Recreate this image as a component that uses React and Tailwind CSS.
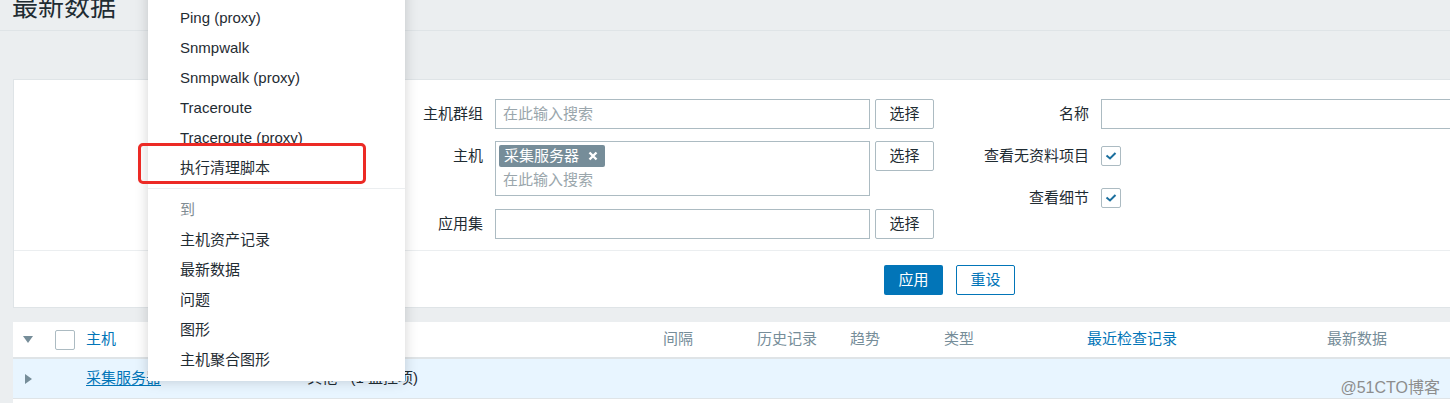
import React from 'react';

const menuTop = ['Ping', 'Ping (proxy)', 'Snmpwalk', 'Snmpwalk (proxy)', 'Traceroute', 'Traceroute (proxy)', '执行清理脚本'];
const menuGoto = ['主机资产记录', '最新数据', '问题', '图形', '主机聚合图形'];

function Checkbox({ checked }) {
  return (
    <span className="w-[20px] h-[20px] border border-[#acbbc2] rounded-[2px] bg-white flex items-center justify-center">
      {checked && (
        <svg width="12" height="10" viewBox="0 0 12 10">
          <polyline points="1.5,4.5 5,7.5 10.5,2" fill="none" stroke="#1b6f9e" strokeWidth="2" />
        </svg>
      )}
    </span>
  );
}

function SelectButton() {
  return (
    <button className="w-[59px] h-[30px] border border-[#acbbc2] rounded-[2px] bg-white text-[#1f2c33] shrink-0">
      选择
    </button>
  );
}

export default function App() {
  return (
    <div className="relative w-[1450px] h-[403px] overflow-hidden bg-[#ebeef0] text-[15px] text-[#1f2c33] font-['Liberation_Sans','Noto_Sans_CJK_SC',sans-serif]">
      {/* Header */}
      <div className="flex items-start h-[31px] border-b border-[#dfe4e7] pl-[12px]">
        <h1 className="text-[26px] leading-[26px] -mt-[6px]">最新数据</h1>
      </div>

      {/* Filter */}
      <div className="mt-[48px] ml-[13px] bg-white border border-r-0 border-[#dfe4e7]">
        <div className="flex pt-[19px] pb-[11px]">
          <div className="w-[920px] flex flex-col">
            <div className="flex items-start">
              <label className="w-[481px] pr-[12px] text-right leading-[30px]">主机群组</label>
              <div className="w-[375px] h-[30px] border border-[#acbbc2] px-[7px] leading-[28px] text-[#9aa6ac]">在此输入搜索</div>
              <div className="ml-[5px]"><SelectButton /></div>
            </div>
            <div className="flex items-start mt-[12px]">
              <label className="w-[481px] pr-[12px] text-right leading-[30px]">主机</label>
              <div className="w-[375px] h-[55px] border border-[#acbbc2] px-[3px] pt-[3px]">
                <span className="inline-flex items-center h-[22px] bg-[#768d99] text-white rounded-[2px] pl-[5px] pr-[7px]">
                  采集服务器
                  <svg className="ml-[9px]" width="10" height="10" viewBox="0 0 10 10">
                    <path d="M1.5 1.5 L8.5 8.5 M8.5 1.5 L1.5 8.5" stroke="#fff" strokeWidth="2.4" />
                  </svg>
                </span>
                <div className="pl-[4px] leading-[24px] text-[#9aa6ac]">在此输入搜索</div>
              </div>
              <div className="ml-[5px]"><SelectButton /></div>
            </div>
            <div className="flex items-start mt-[13px]">
              <label className="w-[481px] pr-[12px] text-right leading-[30px]">应用集</label>
              <div className="w-[375px] h-[30px] border border-[#acbbc2]"></div>
              <div className="ml-[5px]"><SelectButton /></div>
            </div>
          </div>
          <div className="flex-1 flex flex-col">
            <div className="flex items-start">
              <label className="w-[167px] pr-[12px] text-right leading-[30px]">名称</label>
              <div className="flex-1 h-[30px] border border-r-0 border-[#acbbc2]"></div>
            </div>
            <div className="flex items-center h-[30px] mt-[12px]">
              <label className="w-[167px] pr-[12px] text-right">查看无资料项目</label>
              <Checkbox checked />
            </div>
            <div className="flex items-center h-[30px] mt-[12px]">
              <label className="w-[167px] pr-[12px] text-right">查看细节</label>
              <Checkbox checked />
            </div>
          </div>
        </div>
        <div className="border-t border-[#ebeef0] pt-[14px] pb-[12px] pl-[870px] flex gap-[13px]">
          <button className="w-[59px] h-[30px] bg-[#0275b8] text-white rounded-[2px]">应用</button>
          <button className="w-[59px] h-[30px] border border-[#0275b8] text-[#0275b8] bg-white rounded-[2px]">重设</button>
        </div>
      </div>

      {/* Table */}
      <div className="mt-[14px] ml-[13px] bg-white h-[100px]">
        <div className="flex items-center h-[37px] border-b-2 border-[#dfe4e7] text-[#768d99]">
          <span className="w-[30px] flex justify-center">
            <svg width="10" height="7" viewBox="0 0 10 7"><path d="M0 0 H10 L5 7 Z" fill="#768d99" /></svg>
          </span>
          <span className="w-[43px] pl-[12px]"><Checkbox /></span>
          <span className="w-[577px] text-[#0275b8]">主机</span>
          <span className="w-[94px]">间隔</span>
          <span className="w-[93px]">历史记录</span>
          <span className="w-[94px]">趋势</span>
          <span className="w-[143px]">类型</span>
          <span className="w-[240px] text-[#0275b8]">最近检查记录</span>
          <span>最新数据</span>
        </div>
        <div className="flex items-center h-[40px] bg-[#e8f5ff] border-b border-[#dfe4e7]">
          <span className="w-[30px] flex justify-center">
            <svg width="7" height="10" viewBox="0 0 7 10"><path d="M0 0 L7 5 L0 10 Z" fill="#768d99" /></svg>
          </span>
          <span className="w-[43px]"></span>
          <span className="w-[212px] text-[#0275b8] underline underline-offset-2">采集服务器</span>
          <span>- 其他 - (1 监控项)</span>
        </div>
      </div>

      {/* Context menu */}
      <div className="absolute left-[148px] top-[-27px] w-[257px] bg-white shadow-[0_0_12px_rgba(0,0,0,0.18)] pb-[6px]">
        {menuTop.map((item) => (
          <div key={item} className="h-[30px] leading-[30px] pl-[32px]">{item}</div>
        ))}
        <div className="mt-[5px] border-t border-[#ebeef0]"></div>
        <div className="mt-[6px] h-[30px] leading-[30px] pl-[32px] text-[#7f8c93]">到</div>
        {menuGoto.map((item) => (
          <div key={item} className="h-[30px] leading-[30px] pl-[32px]">{item}</div>
        ))}
      </div>

      {/* Annotation */}
      <div className="absolute left-[138px] top-[143px] w-[228px] h-[41px] border-[3px] border-[#ec2a25] rounded-[5px]"></div>

      {/* Watermark */}
      <div className="absolute right-[10px] top-[376px] text-[16px] text-[#8d8d8d]">@51CTO博客</div>
    </div>
  );
}
